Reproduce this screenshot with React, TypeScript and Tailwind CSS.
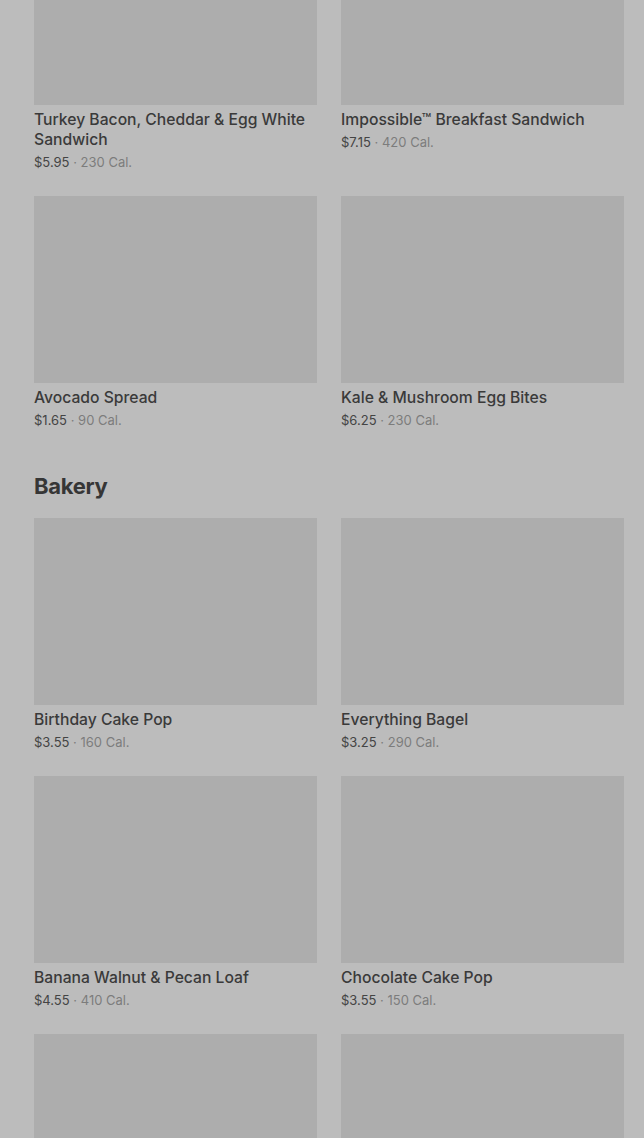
import React from 'react';

type Item = { name: string; price: string; cal: string };

const topItems: Item[] = [
  { name: 'Turkey Bacon, Cheddar & Egg White Sandwich', price: '$5.95', cal: '230 Cal.' },
  { name: 'Impossible™ Breakfast Sandwich', price: '$7.15', cal: '420 Cal.' },
  { name: 'Avocado Spread', price: '$1.65', cal: '90 Cal.' },
  { name: 'Kale & Mushroom Egg Bites', price: '$6.25', cal: '230 Cal.' },
];

const bakery: Item[] = [
  { name: 'Birthday Cake Pop', price: '$3.55', cal: '160 Cal.' },
  { name: 'Everything Bagel', price: '$3.25', cal: '290 Cal.' },
  { name: 'Banana Walnut & Pecan Loaf', price: '$4.55', cal: '410 Cal.' },
  { name: 'Chocolate Cake Pop', price: '$3.55', cal: '150 Cal.' },
];

const ItemCard: React.FC<{ item: Item }> = ({ item }) => (
  <div className="flex flex-col">
    <div className="h-[187px] bg-[#adadad]" />
    <p className="mt-[5px] text-[15.7px] leading-[20px] font-medium text-[#3a3a3a]">{item.name}</p>
    <p className="mt-[2px] text-[13px] leading-[20px] text-[#444]">
      {item.price} <span className="text-[#7c7c7c]">· {item.cal}</span>
    </p>
  </div>
);

export default function App() {
  return (
    <div
      className="h-[1138px] overflow-hidden bg-[#bcbcbc]"
      style={{ fontFamily: 'Inter, "Noto Sans", sans-serif' }}
    >
      <div className="-mt-[82px] pl-[34px] pr-[20px]">
        <div className="grid grid-cols-2 gap-x-6 gap-y-6">
          {topItems.map((it) => (
            <ItemCard key={it.name} item={it} />
          ))}
        </div>

        <h2 className="mt-10 mb-4 text-[22px] leading-[32px] font-bold tracking-[-0.3px] text-[#363636]">
          Bakery
        </h2>

        <div className="grid grid-cols-2 gap-x-6 gap-y-6">
          {bakery.map((it) => (
            <ItemCard key={it.name} item={it} />
          ))}
          <div className="h-[187px] bg-[#adadad]" />
          <div className="h-[187px] bg-[#adadad]" />
        </div>
      </div>
    </div>
  );
}
